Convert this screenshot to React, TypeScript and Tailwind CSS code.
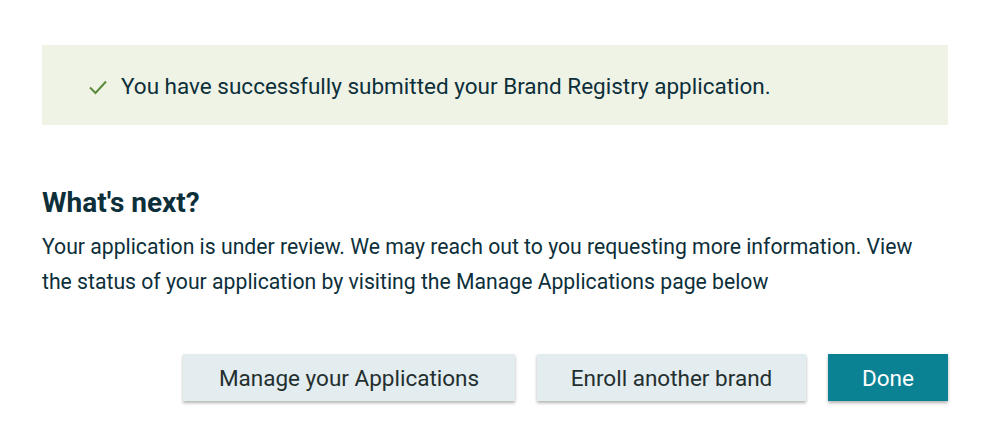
export default function App() {
  return (
    <div
      className="w-[990px] h-[448px] bg-white px-[42px] pt-[45px] text-[#0d2f3a]"
      style={{ fontFamily: 'Roboto, "Liberation Sans", sans-serif' }}
    >
      <div className="h-[80px] bg-[#eff3e6] flex items-center pl-[46px]">
        <svg width="20" height="16" viewBox="0 0 20 16" className="mr-[13px] mt-[4px]">
          <path d="M2 8.5 L7.5 14 L18 2.5" fill="none" stroke="#5b8a3c" strokeWidth="2" />
        </svg>
        <span className="text-[22.5px] pt-[3px]">
          You have successfully submitted your Brand Registry application.
        </span>
      </div>

      <h2 className="mt-[62px] text-[28px] font-bold leading-[32px]">What's next?</h2>
      <p className="mt-[10px] text-[21.2px] leading-[35px] max-w-[880px]">
        Your application is under review. We may reach out to you requesting more information. View
        the status of your application by visiting the Manage Applications page below
      </p>

      <div className="mt-[55px] flex justify-end gap-[22px]">
        <button className="h-[47px] w-[332px] pt-[2px] bg-[#e3ecee] text-[#232f2f] text-[22.5px] shadow-[0_2px_3px_rgba(0,0,0,0.3)]">
          Manage your Applications
        </button>
        <button className="h-[47px] w-[269px] pt-[2px] bg-[#e3ecee] text-[#232f2f] text-[22.5px] shadow-[0_2px_3px_rgba(0,0,0,0.3)]">
          Enroll another brand
        </button>
        <button className="h-[47px] w-[120px] pt-[2px] bg-[#0b8294] text-white text-[22.5px] shadow-[0_2px_3px_rgba(0,0,0,0.3)]">
          Done
        </button>
      </div>
    </div>
  );
}
